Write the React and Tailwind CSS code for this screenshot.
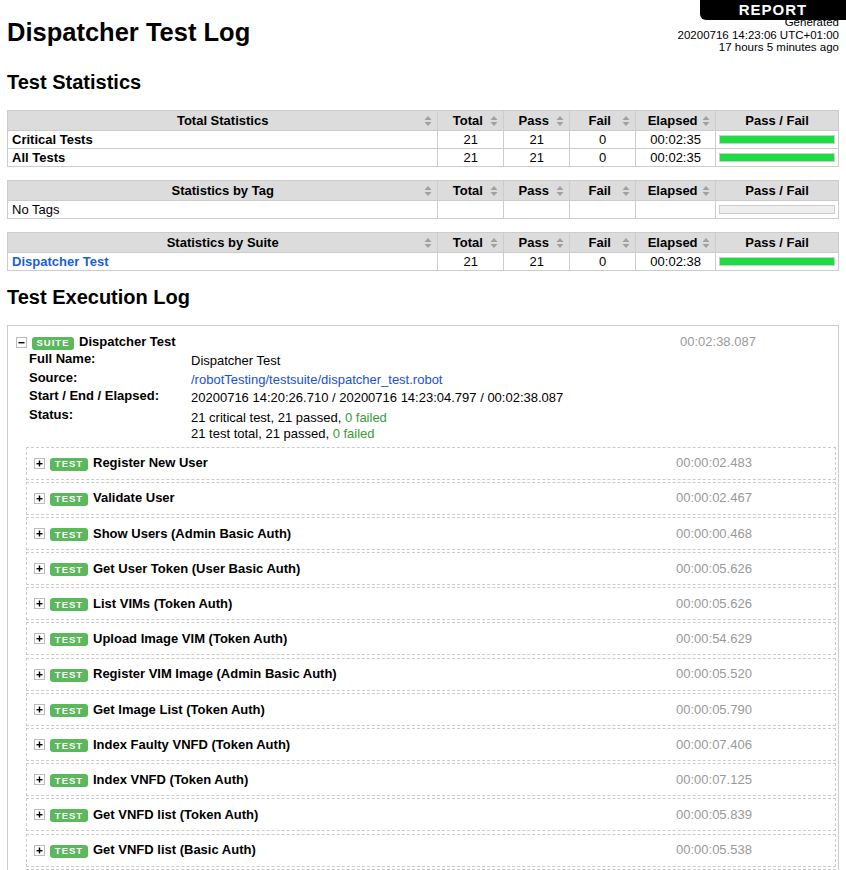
import React from 'react';

const font = { fontFamily: '"Liberation Sans", Arial, Helvetica, sans-serif' };

const SortIcon = () => (
  <svg width="8" height="11" viewBox="0 0 8 11" className="absolute right-[5px] top-1/2 -translate-y-1/2">
    <path d="M4 0.5 L7.5 4.5 L0.5 4.5 Z" fill="#a0a0a0" />
    <path d="M4 10.5 L7.5 6.5 L0.5 6.5 Z" fill="#a0a0a0" />
  </svg>
);

const Toggle = ({ open }) => (
  <span className="inline-flex w-[11px] h-[11px] border border-[#bbb] bg-white items-center justify-center shrink-0">
    <svg width="7" height="7" viewBox="0 0 7 7">
      <rect x="0.5" y="3" width="6" height="1.4" fill="#000" />
      {!open && <rect x="2.8" y="0.5" width="1.4" height="6" fill="#000" />}
    </svg>
  </span>
);

const Badge = ({ label, w }) => (
  <span
    className={`inline-flex items-center justify-center h-[13px] rounded-[3px] bg-[#5cb85c] text-white text-[9.5px] font-bold tracking-[1px] leading-none shrink-0 ${w}`}
  >
    {label}
  </span>
);

const Bar = ({ empty }) => (
  <div className={`mx-[3px] h-[9px] border border-[#ccc] ${empty ? 'bg-[#eee]' : 'bg-[#1edd43]'}`} />
);

const StatTable = ({ title, rows, className = '' }) => (
  <table className={`w-[832px] border-collapse text-[13px] leading-[17px] ${className}`}>
    <thead>
      <tr className="bg-[#dcdcdc] h-[20px]">
        <th className="relative border border-[#ccc] w-[431px] font-bold">{title}<SortIcon /></th>
        <th className="relative border border-[#ccc] w-[66px] font-bold pr-[6px]">Total<SortIcon /></th>
        <th className="relative border border-[#ccc] w-[66px] font-bold pr-[6px]">Pass<SortIcon /></th>
        <th className="relative border border-[#ccc] w-[66px] font-bold pr-[6px]">Fail<SortIcon /></th>
        <th className="relative border border-[#ccc] w-[80px] font-bold pr-[6px]">Elapsed<SortIcon /></th>
        <th className="border border-[#ccc] w-[123px] font-bold">Pass / Fail</th>
      </tr>
    </thead>
    <tbody>
      {rows.map((r, i) => (
        <tr key={i} className="h-[18px]">
          <td className={`border border-[#ccc] px-[4px] ${r.cls || ''}`}>{r.name}</td>
          <td className="border border-[#ccc] text-center">{r.total}</td>
          <td className="border border-[#ccc] text-center">{r.pass}</td>
          <td className="border border-[#ccc] text-center">{r.fail}</td>
          <td className="border border-[#ccc] text-center">{r.elapsed}</td>
          <td className="border border-[#ccc]"><Bar empty={r.empty} /></td>
        </tr>
      ))}
    </tbody>
  </table>
);

const tests = [
  ['Register New User', '00:00:02.483'],
  ['Validate User', '00:00:02.467'],
  ['Show Users (Admin Basic Auth)', '00:00:00.468'],
  ['Get User Token (User Basic Auth)', '00:00:05.626'],
  ['List VIMs (Token Auth)', '00:00:05.626'],
  ['Upload Image VIM (Token Auth)', '00:00:54.629'],
  ['Register VIM Image (Admin Basic Auth)', '00:00:05.520'],
  ['Get Image List (Token Auth)', '00:00:05.790'],
  ['Index Faulty VNFD (Token Auth)', '00:00:07.406'],
  ['Index VNFD (Token Auth)', '00:00:07.125'],
  ['Get VNFD list (Token Auth)', '00:00:05.839'],
  ['Get VNFD list (Basic Auth)', '00:00:05.538'],
  ['Get VNFD (Token Auth)', '00:00:05.201'],
];

export default function App() {
  return (
    <div className="relative bg-white text-black h-[870px] overflow-hidden px-[7px]" style={font}>
      <div className="absolute right-0 top-0 w-[146px] h-[20px] bg-black rounded-bl-[6px] text-white text-[15px] font-bold tracking-[1px] flex items-center justify-center z-10">
        REPORT
      </div>
      <div className="absolute right-[7px] top-[16px] text-right text-[11.5px] leading-[12.5px]">
        <div>Generated</div>
        <div>20200716 14:23:06 UTC+01:00</div>
        <div>17 hours 5 minutes ago</div>
      </div>

      <h1 className="pt-[17px] text-[25.5px] leading-[30px] font-bold">Dispatcher Test Log</h1>
      <h2 className="mt-[23px] text-[20px] leading-[24px] font-bold">Test Statistics</h2>

      <StatTable
        className="mt-[16px]"
        title="Total Statistics"
        rows={[
          { name: 'Critical Tests', cls: 'font-bold', total: 21, pass: 21, fail: 0, elapsed: '00:02:35' },
          { name: 'All Tests', cls: 'font-bold', total: 21, pass: 21, fail: 0, elapsed: '00:02:35' },
        ]}
      />
      <StatTable
        className="mt-[13px]"
        title="Statistics by Tag"
        rows={[{ name: 'No Tags', total: '', pass: '', fail: '', elapsed: '', empty: true }]}
      />
      <StatTable
        className="mt-[13px]"
        title="Statistics by Suite"
        rows={[
          { name: 'Dispatcher Test', cls: 'font-bold text-[#1a5fd0]', total: 21, pass: 21, fail: 0, elapsed: '00:02:38' },
        ]}
      />

      <h2 className="mt-[14px] text-[20px] leading-[24px] font-bold">Test Execution Log</h2>

      <div className="mt-[16px] w-[832px] border border-[#ccc] pt-[7px] text-[13px]">
        <div className="flex items-center h-[18px] pl-[8px]">
          <Toggle open />
          <span className="ml-[5px]"><Badge label="SUITE" w="w-[42px]" /></span>
          <span className="ml-[5px] font-bold flex-1">Dispatcher Test</span>
          <span className="w-[158px] text-[#999]">00:02:38.087</span>
        </div>
        <div className="pl-[21px] mt-[1px] grid grid-cols-[162px_1fr] leading-[18.5px]">
          <div className="font-bold -mt-[2px]">Full Name:</div>
          <div>Dispatcher Test</div>
          <div className="font-bold -mt-[2px]">Source:</div>
          <div className="text-[#1a4fd6]">/robotTesting/testsuite/dispatcher_test.robot</div>
          <div className="font-bold -mt-[2px]">Start / End / Elapsed:</div>
          <div>20200716 14:20:26.710 / 20200716 14:23:04.797 / 00:02:38.087</div>
          <div className="font-bold -mt-[2px]">Status:</div>
          <div className="leading-[16px] pt-[2px]">
            <div>21 critical test, 21 passed, <span className="text-[#3a9a3a]">0 failed</span></div>
            <div>21 test total, 21 passed, <span className="text-[#3a9a3a]">0 failed</span></div>
          </div>
        </div>
        <div className="ml-[18px] mr-[2px] mt-[5px] flex flex-col gap-[2.2px]">
          {tests.map(([name, el]) => (
            <div key={name} className="h-[33px] shrink-0 border border-dashed border-[#ccc] flex items-center pl-[7px]">
              <Toggle />
              <span className="ml-[5px]"><Badge label="TEST" w="w-[38px]" /></span>
              <span className="ml-[5px] font-bold flex-1">{name}</span>
              <span className="w-[159px] text-[#999]">{el}</span>
            </div>
          ))}
        </div>
      </div>
    </div>
  );
}
